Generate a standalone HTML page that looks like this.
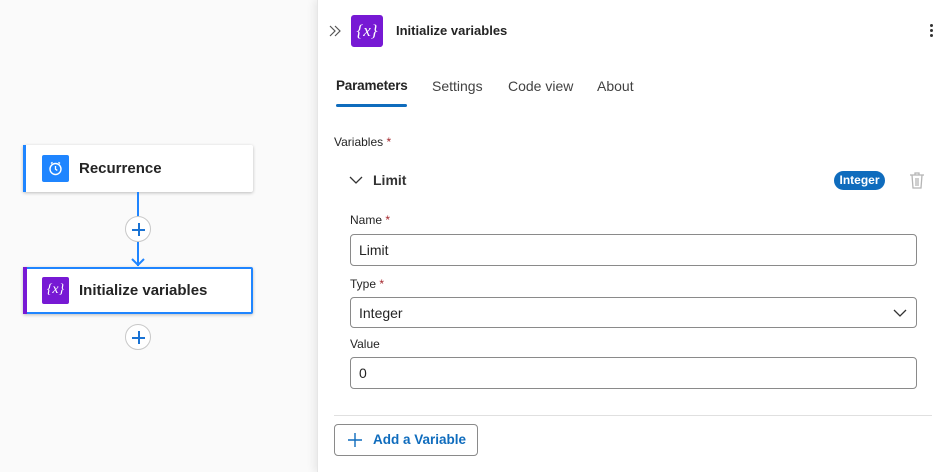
<!DOCTYPE html>
<html><head><style>
*{box-sizing:border-box;margin:0;padding:0}
body{width:948px;height:472px;overflow:hidden;background:#fafafa;font-family:"Liberation Sans",sans-serif;color:#242424;position:relative}
.a{position:absolute}
.card{position:absolute;left:23px;width:230px;height:47px;background:#fff;box-shadow:0 1px 3px rgba(0,0,0,.25);border-radius:2px}
.card .t{position:absolute;left:56px;top:15px;font-size:15px;font-weight:bold;color:#242424}
.ic{position:absolute;width:27px;height:27px;border-radius:2px;color:#fff;font-family:"Liberation Serif",serif;font-style:italic;font-size:14px;text-align:center;line-height:26px}
.circ{position:absolute;width:26px;height:26px;border-radius:50%;background:#fff;border:1px solid #c8c8c8}
.circ:before{content:"";position:absolute;left:6px;top:12px;width:13px;height:1.5px;background:#1a73d4}
.circ:after{content:"";position:absolute;left:12px;top:6px;width:1.5px;height:13px;background:#1a73d4}
.panel{position:absolute;left:317px;top:0;width:631px;height:472px;background:#fff;box-shadow:-3px 0 8px rgba(0,0,0,.08);border-left:1px solid #e6e6e6}
.lbl{position:absolute;font-size:12px;color:#242424}
.lbl b{color:#a4262c;font-weight:normal}
.inp{position:absolute;left:32px;width:567px;height:32px;border:1px solid #8a8a8a;border-radius:4px;font-size:14px;padding:7px 8px;color:#242424}
</style></head><body>
<div class="card" style="top:145px"><div class="a" style="left:0;top:0;width:3px;height:47px;background:#1f85ff"></div>
<div class="ic" style="left:19px;top:10px;background:#1f85ff">
<svg width="27" height="27" viewBox="0 0 27 27" style="position:absolute;left:0;top:0"><circle cx="13.5" cy="14" r="5.5" fill="none" stroke="#fff" stroke-width="1.4"/><path d="M13.5 11v3.2l1.8 1.2M9 8.5l1.5-1.2M18 8.5l-1.5-1.2" stroke="#fff" stroke-width="1.3" fill="none"/></svg></div>
<div class="t">Recurrence</div></div>
<div class="a" style="left:137px;top:192px;width:2px;height:74px;background:#1f85ff"></div>
<svg class="a" style="left:131px;top:256px" width="14" height="11"><path d="M1 3l6 6 6-6" stroke="#1f85ff" stroke-width="2" fill="none"/></svg>
<div class="circ" style="left:125px;top:216px"></div>
<div class="card" style="top:267px;border:2px solid #1f85ff"><div class="a" style="left:-2px;top:-2px;width:4px;height:47px;background:#7719d4"></div>
<div class="ic" style="left:17px;top:8px;background:#7719d4">{<span>x</span>}</div>
<div class="t" style="left:54px;top:13px">Initialize variables</div></div>
<div class="circ" style="left:125px;top:324px"></div>

<div class="panel">
<svg class="a" style="left:11px;top:25px" width="12" height="12"><path d="M1 1l5 5-5 5M6 1l5 5-5 5" stroke="#555" stroke-width="1.2" fill="none"/></svg>
<div class="ic" style="left:33px;top:15px;width:32px;height:32px;line-height:31px;font-size:17px;background:#7719d4;border-radius:3px">{<span>x</span>}</div>
<div class="a" style="left:78px;top:23px;font-size:13px;font-weight:bold">Initialize variables</div>
<div class="a" style="left:612px;top:24px;width:3px;height:3px;border-radius:50%;background:#333;box-shadow:0 5px 0 #333,0 10px 0 #333"></div>
<div class="a" style="left:18px;top:78px;font-size:13.5px;font-weight:bold;letter-spacing:-0.2px">Parameters</div>
<div class="a" style="left:114px;top:78px;font-size:14px;color:#424242">Settings</div>
<div class="a" style="left:190px;top:78px;font-size:14px;color:#424242">Code view</div>
<div class="a" style="left:279px;top:78px;font-size:14px;color:#424242">About</div>
<div class="a" style="left:18px;top:104px;width:71px;height:3px;border-radius:2px;background:#0f6cbd"></div>
<div class="lbl" style="left:16px;top:135px">Variables <b>*</b></div>
<svg class="a" style="left:31px;top:175px" width="14" height="10"><path d="M1 2l6 6 6-6" stroke="#333" stroke-width="1.3" fill="none"/></svg>
<div class="a" style="left:55px;top:172px;font-size:14px;font-weight:bold;color:#333">Limit</div>
<div class="a" style="left:516px;top:171px;width:51px;height:19px;border-radius:10px;background:#0f6cbd;color:#fff;font-size:12px;font-weight:bold;text-align:center;line-height:19px">Integer</div>
<svg class="a" style="left:590px;top:171px" width="18" height="19"><path d="M2 4h14M7 4V2h4v2M4 4l1 13h8l1-13M8 7v8M10 7v8" stroke="#b5b5b5" stroke-width="1.3" fill="none"/></svg>
<div class="lbl" style="left:32px;top:213px">Name <b>*</b></div>
<div class="inp" style="top:234px">Limit</div>
<div class="lbl" style="left:32px;top:277px">Type <b>*</b></div>
<div class="inp" style="top:297px;height:31px">Integer</div>
<svg class="a" style="left:575px;top:308px" width="14" height="10"><path d="M1 2l6 6 6-6" stroke="#333" stroke-width="1.3" fill="none"/></svg>
<div class="lbl" style="left:32px;top:337px">Value</div>
<div class="inp" style="top:357px">0</div>
<div class="a" style="left:16px;top:415px;width:598px;height:1px;background:#e0e0e0"></div>
<div class="a" style="left:16px;top:424px;width:144px;height:32px;border:1px solid #8a8a8a;border-radius:4px;color:#0f6cbd;font-size:13.5px;font-weight:bold;padding:7px 0 0 38px">Add a Variable</div>
<svg class="a" style="left:29px;top:432px" width="16" height="16"><path d="M8 1v14M1 8h14" stroke="#0f6cbd" stroke-width="1.4"/></svg>
</div>
</body></html>
